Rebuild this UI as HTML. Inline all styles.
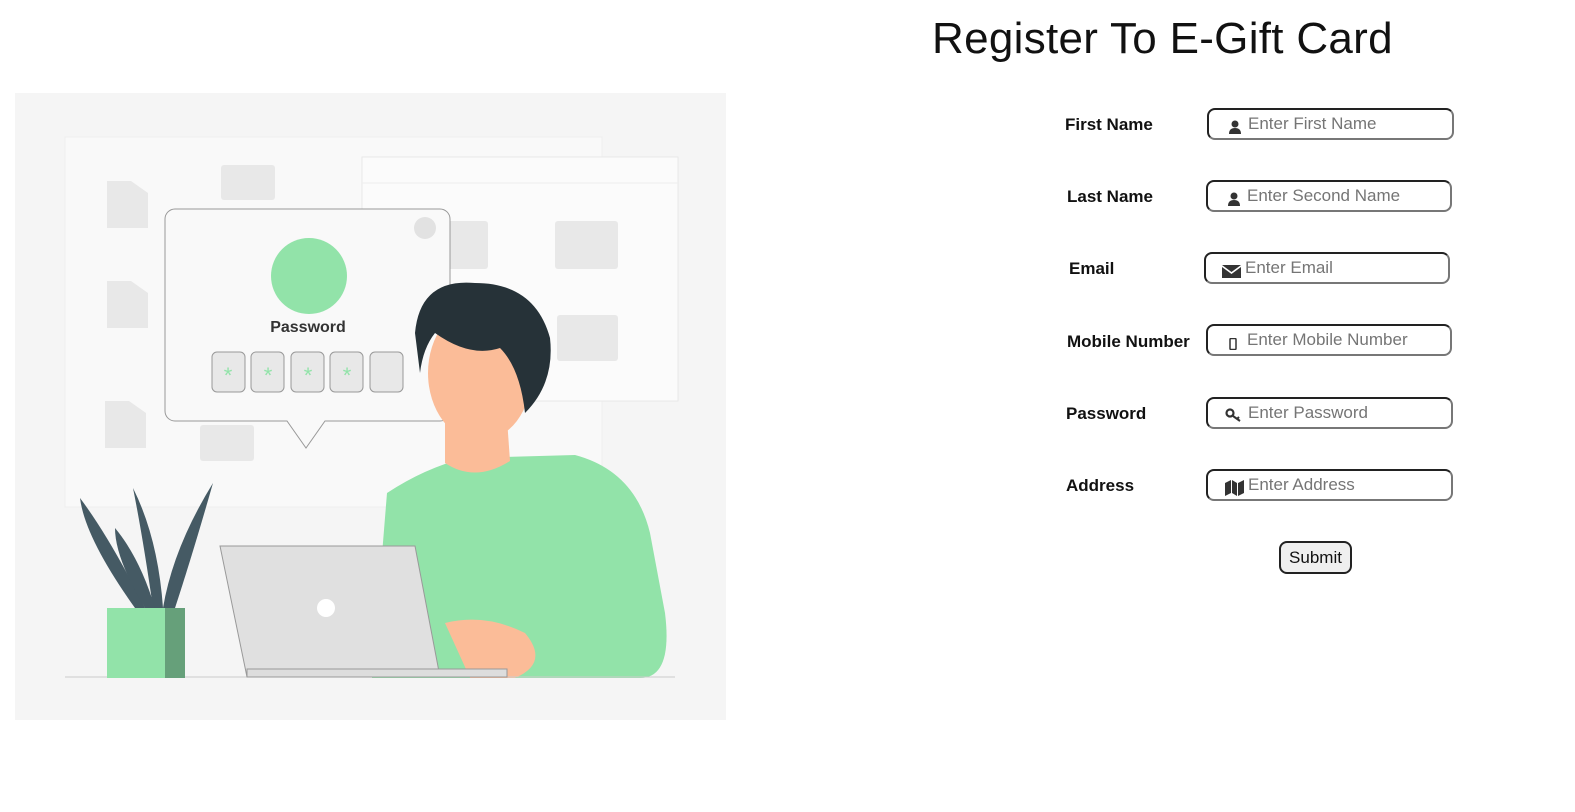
<!DOCTYPE html>
<html><head><meta charset="utf-8"><style>
body{margin:0;width:1575px;height:812px;background:#fff;font-family:"Liberation Sans",sans-serif;position:relative;overflow:hidden}
h1{position:absolute;left:932px;top:14px;margin:0;font-size:44px;font-weight:normal;color:#111;letter-spacing:0.3px}
.lbl{position:absolute;font-weight:bold;font-size:17px;color:#111}
.inp{position:absolute;width:242px;height:32px;border:2px solid;border-color:#222 #777 #777 #222;border-radius:8px;box-sizing:border-box;font-size:17px;color:#757575;line-height:28px}
.inp svg{position:absolute}
.inp span{position:absolute;top:0}
.btn{position:absolute;left:1279px;top:541px;width:73px;height:33px;border:2px solid #222;border-radius:8px;background:#efefef;box-sizing:border-box;font-size:17px;text-align:center;line-height:29px;color:#111}
</style></head><body>
<svg style="position:absolute;left:15px;top:93px" width="711" height="627" viewBox="0 0 711 627">
<rect width="711" height="627" fill="#f5f5f5"/>
<rect x="50" y="44" width="537" height="370" fill="#f9f9f9" stroke="#eee"/>
<rect x="347" y="64" width="316" height="244" fill="#fbfbfb" stroke="#e8e8e8"/>
<line x1="347" y1="90" x2="663" y2="90" stroke="#eee"/>
<g fill="#e8e8e8"><path d="M92 88h24l17 12v35H92z"/><path d="M92 188h24l17 12v35H92z"/><path d="M90 308h24l17 12v35H90z"/>
<rect x="206" y="72" width="54" height="35" rx="3"/><rect x="540" y="128" width="63" height="48" rx="3"/><rect x="542" y="222" width="61" height="46" rx="3"/><rect x="185" y="332" width="54" height="36" rx="3"/><rect x="425" y="128" width="48" height="48" rx="3"/></g>
<path d="M160 116h265a10 10 0 0 1 10 10v192a10 10 0 0 1-10 10H310l-19 27-19-27H160a10 10 0 0 1-10-10V126a10 10 0 0 1 10-10z" fill="#f9f9f9" stroke="#999"/>
<circle cx="410" cy="135" r="11" fill="#e2e2e2"/>
<circle cx="294" cy="183" r="38" fill="#92e3a9"/>
<text x="293" y="239" font-size="16" font-weight="bold" text-anchor="middle" fill="#333" font-family="Liberation Sans">Password</text>
<g fill="#e8e8e8" stroke="#999"><rect x="197" y="259" width="33" height="40" rx="5"/><rect x="236" y="259" width="33" height="40" rx="5"/><rect x="276" y="259" width="33" height="40" rx="5"/><rect x="315" y="259" width="33" height="40" rx="5"/><rect x="355" y="259" width="33" height="40" rx="5"/></g>
<g fill="#92e3a9" font-size="22" text-anchor="middle" font-family="Liberation Sans"><text x="213" y="290">*</text><text x="253" y="290">*</text><text x="293" y="290">*</text><text x="332" y="290">*</text></g>
<path d="M357 585L372 400Q410 375 450 365L560 362Q620 378 635 440L650 520Q658 585 625 585Z" fill="#92e3a9"/>
<path d="M430 300l0 70q30 20 65-2l-5-70z" fill="#fbbc98"/>
<ellipse cx="465" cy="280" rx="52" ry="68" fill="#fbbc98"/>
<path d="M400 240q5-55 60-50q60 0 75 55q5 45-25 75q-5-45-25-65q-30 10-65-15q-12 15-15 40z" fill="#263238"/>
<path d="M430 530q40-10 80 10q25 30-10 45l-45 0z" fill="#fbbc98"/>
<path d="M50 584H660" stroke="#ccc"/>
<path d="M205 453h195l25 131H232z" fill="#e0e0e0" stroke="#999"/>
<path d="M232 584h260v-8H232z" fill="#ddd" stroke="#999"/>
<circle cx="311" cy="515" r="9" fill="#fff"/>
<g fill="#455a64"><path d="M120 515q-50-70-55-110q30 40 65 110z"/><path d="M138 515q-10-70-20-120q25 50 30 120z"/><path d="M148 515q10-60 50-125q-20 70-38 125z"/><path d="M130 515q-30-50-30-80q25 30 40 80z"/></g>
<rect x="92" y="515" width="78" height="70" fill="#92e3a9"/><rect x="150" y="515" width="20" height="70" fill="#66a07a"/>
</svg>
<h1>Register To E-Gift Card</h1>
<div class="lbl" style="left:1065px;top:115px">First Name</div>
<div class="lbl" style="left:1067px;top:187px">Last Name</div>
<div class="lbl" style="left:1069px;top:259px">Email</div>
<div class="lbl" style="left:1067px;top:332px">Mobile Number</div>
<div class="lbl" style="left:1066px;top:404px">Password</div>
<div class="lbl" style="left:1066px;top:476px">Address</div>
<div class="inp" style="left:1207px;top:108px;width:247px"><svg style="left:20px;top:10px" width="12" height="14" viewBox="0 0 12 14"><circle cx="6" cy="4" r="3.5" fill="#333"/><path d="M0 14q0-6 6-6q6 0 6 6z" fill="#333"/></svg><span style="left:39px">Enter First Name</span></div>
<div class="inp" style="left:1206px;top:180px;width:246px"><svg style="left:20px;top:10px" width="12" height="14" viewBox="0 0 12 14"><circle cx="6" cy="4" r="3.5" fill="#333"/><path d="M0 14q0-6 6-6q6 0 6 6z" fill="#333"/></svg><span style="left:39px">Enter Second Name</span></div>
<div class="inp" style="left:1204px;top:252px;width:246px"><svg style="left:16px;top:11px" width="19" height="13" viewBox="0 0 19 13"><path d="M0 0h19l-9.5 7zM0 2l9.5 7 9.5-7v11H0z" fill="#333"/></svg><span style="left:39px">Enter Email</span></div>
<div class="inp" style="left:1206px;top:324px;width:246px"><svg style="left:21px;top:12px" width="8" height="12" viewBox="0 0 8 12"><rect x="1" y="0.5" width="6" height="11" rx="1" fill="none" stroke="#333" stroke-width="1.5"/></svg><span style="left:39px">Enter Mobile Number</span></div>
<div class="inp" style="left:1206px;top:397px;width:247px"><svg style="left:17px;top:9px" width="17" height="14" viewBox="0 0 17 14"><circle cx="5" cy="5" r="3.5" fill="none" stroke="#333" stroke-width="2.2"/><path d="M8 8l7 5M12 11l2-2" stroke="#333" stroke-width="2"/></svg><span style="left:40px">Enter Password</span></div>
<div class="inp" style="left:1206px;top:469px;width:247px"><svg style="left:17px;top:9px" width="19" height="16" viewBox="0 0 19 16"><path d="M0 3l6-3v13l-6 3zM7 0l5 3v13l-5-3zM13 3l6-3v13l-6 3z" fill="#333"/></svg><span style="left:40px">Enter Address</span></div>
<div class="btn">Submit</div>
</body></html>
